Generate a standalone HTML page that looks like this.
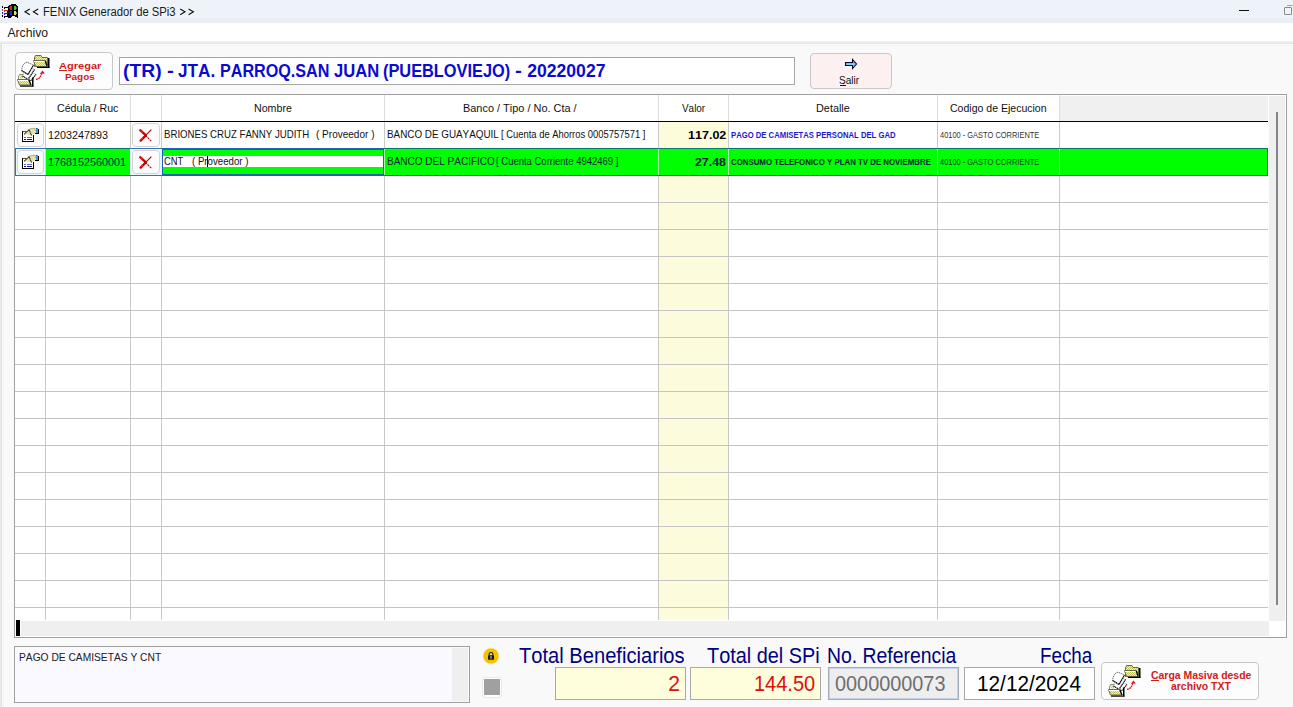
<!DOCTYPE html>
    <html><head><meta charset="utf-8">
    <style>
    *{box-sizing:border-box;margin:0;padding:0}
    html,body{width:1293px;height:707px;overflow:hidden;background:#f9f9f9;font-family:"Liberation Sans",sans-serif;color:#000;font-kerning:none}
    .a{position:absolute}
    .t{position:absolute;white-space:pre;transform-origin:0 0;font-kerning:none}
    svg{position:absolute;overflow:visible}
    </style></head><body>
    
<div class="a" style="left:0;top:0;width:1293px;height:18px;background:#eef3fa"></div>
<div class="a" style="left:0;top:18px;width:1293px;height:5px;background:#ebeff5"></div>
<svg style="left:0;top:0" width="24" height="24" viewBox="0 0 24 24" shape-rendering="crispEdges">
<path d="M8 6h1v-1h2v-1h5v1h1v1h1v12h-1v-1h-2v-1h-3v1h-1v1h-3v-1h-1z" fill="#000"/>
<rect x="10" y="6" width="2" height="4" fill="#e02424"/><rect x="9" y="7" width="1" height="2" fill="#a01818"/>
<rect x="14" y="6" width="2" height="4" fill="#34d034"/><rect x="16" y="7" width="1" height="2" fill="#1a801a"/>
<rect x="10" y="11" width="2" height="4" fill="#1030e0"/><rect x="9" y="12" width="1" height="2" fill="#0a1890"/>
<rect x="14" y="11" width="2" height="4" fill="#f0e040"/><rect x="16" y="12" width="1" height="2" fill="#a09020"/>
<rect x="2" y="6" width="1" height="2" fill="#000"/><rect x="2" y="9" width="1" height="2" fill="#a05050"/>
<rect x="2" y="12" width="1" height="2" fill="#2030a0"/><rect x="2" y="15" width="1" height="2" fill="#000"/>
<rect x="4" y="7" width="4" height="1" fill="#000"/><rect x="4" y="8" width="1" height="1" fill="#000"/>
<rect x="5" y="10" width="3" height="1" fill="#e02020"/><rect x="4" y="10" width="1" height="2" fill="#e02020"/>
<rect x="5" y="13" width="3" height="1" fill="#1020b0"/><rect x="4" y="13" width="1" height="2" fill="#1020b0"/>
<rect x="5" y="16" width="3" height="1" fill="#000"/><rect x="4" y="16" width="1" height="2" fill="#000"/>
</svg>
<div class="t" style="left:42.88px;top:6px;font-size:12.5px;line-height:12.5px;color:#1a1a1a;transform:scaleX(0.9003);">FENIX Generador de SPi3</div>
<svg style="left:0;top:0" width="200" height="24" viewBox="0 0 200 24"><g fill="none" stroke="#111" stroke-width="1.15">
<path d="M29.8 8.9 L25 11.8 L29.8 14.7"/><path d="M38.2 8.9 L33.4 11.8 L38.2 14.7"/>
<path d="M180.2 8.9 L185 11.8 L180.2 14.7"/><path d="M188.6 8.9 L193.4 11.8 L188.6 14.7"/></g></svg>
<div class="a" style="left:1239px;top:10px;width:10px;height:1px;background:#111"></div>
<div class="a" style="left:1284px;top:7px;width:8px;height:8px;border:1px solid #8a8a8a;border-radius:1px"></div>
<div class="a" style="left:1287px;top:5px;width:6px;height:1px;background:#aaa"></div>
<div class="a" style="left:0;top:23px;width:1293px;height:18px;background:#fff"></div>
<div class="t" style="left:7.38px;top:27px;font-size:12.21px;line-height:12.21px;color:#1a1a1a;">Archivo</div>
<div class="a" style="left:0;top:41px;width:1293px;height:2px;background:#efefef"></div>
<div class="a" style="left:0;top:43px;width:1293px;height:1px;background:#e3e3e3"></div>
<div class="a" style="left:0;top:44px;width:1293px;height:1px;background:#fdfdfd"></div><div class="a" style="left:3px;top:45px;width:1290px;height:1px;background:#f2f2f2"></div><div class="a" style="left:3px;top:45px;width:1px;height:662px;background:#f3f3f3"></div>
<div class="a" style="left:0;top:44px;width:1px;height:663px;background:#ebebeb"></div><div class="a" style="left:1px;top:44px;width:1px;height:663px;background:#dedede"></div><div class="a" style="left:2px;top:45px;width:1px;height:662px;background:#fdfdfd"></div>
<div class="a" style="left:15px;top:52px;width:98px;height:38px;border:1px solid #c8c8c8;border-radius:4px;background:#fdfdfd"></div>
<svg style="left:17px;top:54px" width="34" height="34" viewBox="0 0 34 34">
<defs><pattern id="chka" width="2" height="2" patternUnits="userSpaceOnUse"><rect width="2" height="2" fill="#f2f29a"/><rect width="1" height="1" fill="#c4c45a"/><rect x="1" y="1" width="1" height="1" fill="#c4c45a"/></pattern></defs>
<!-- top folder -->
<path d="M17.5 4 L18.5 1.5 L24 1.5 L25 3.5 L30.5 3.5 L30.5 12.5 L17.5 12.5 Z" fill="url(#chka)" stroke="#6a6a4a" stroke-width="1"/>
<path d="M16.5 6.5 L28.5 6.5 L30.5 12.5 L18.5 12.5 Z" fill="url(#chka)" stroke="#6a6a4a" stroke-width="1"/>
<path d="M17 7.5 H28" stroke="#fff" stroke-width="1"/>
<path d="M28.2 7 L30 12" stroke="#000" stroke-width="1.2"/>
<rect x="31" y="4" width="1.5" height="10" fill="#000"/><rect x="20" y="12.8" width="12.5" height="1.2" fill="#000"/>
<!-- papers -->
<path d="M1.5 23 L2.5 20.5 L6 20.5 L7 22.5 L12.5 22.5 L12.5 26 L1.5 26 Z" fill="#fafafa" stroke="#8a8a7a" stroke-width="1"/>
<rect x="3" y="21.5" width="3" height="3" fill="url(#chka)"/>
<path d="M13.5 27 L19 20.5 L16 19 L12 24 Z" fill="#fff" stroke="#999" stroke-width="0.9" stroke-dasharray="1.3 0.7"/>
<path d="M13.5 27 L19 20.5" fill="none" stroke="#000" stroke-width="1.1" stroke-dasharray="1.3 0.6"/>
<path d="M5.5 22 L11 25.3 L17.5 15.5 L15.5 14.8 L10 13 Z" fill="#fff" stroke="#999" stroke-width="0.9" stroke-dasharray="1.3 0.7"/>
<path d="M5.5 22 L11 25.3 L17.5 15.5" fill="none" stroke="#000" stroke-width="1.1" stroke-dasharray="1.3 0.6"/>
<path d="M10 8.2 C7 8.5 5 12 4.6 16.5 L11 20.5 L16.5 11 Z" fill="#fff" stroke="#666" stroke-width="1" stroke-dasharray="1.3 0.7"/>
<path d="M4.6 16.5 L11 20.5 L16.5 11" fill="none" stroke="#000" stroke-width="1.2" stroke-dasharray="1.4 0.6"/>
<!-- bottom folder -->
<path d="M0.5 25.5 L11.5 25.5 L14 31 L2.5 31 Z" fill="url(#chka)" stroke="#6a6a4a" stroke-width="1"/>
<path d="M1 26.5 H11.5" stroke="#fff" stroke-width="1"/>
<path d="M11.8 25.8 L14 31" stroke="#000" stroke-width="1.2"/>
<rect x="15" y="23.5" width="1.5" height="9" fill="#000"/><rect x="3" y="31.5" width="13.5" height="1.2" fill="#000"/>
<!-- red arrow -->
<path d="M19 25.3 Q23 25 24.6 20" fill="none" stroke="#d81010" stroke-width="1.3" stroke-dasharray="1.8 0.6"/>
<path d="M25.5 16.6 L22.8 19.9 L27.8 19.6 Z" fill="#e01010"/>
</svg>
<div class="t" style="left:58.72px;top:61px;font-size:9.884px;line-height:9.884px;color:#d21a1a;font-weight:bold;transform:scaleX(1.1199);">Agregar</div><div class="a" style="left:59.00px;top:70px;width:7.93px;height:1px;background:#d21a1a"></div>
<div class="t" style="left:65.24px;top:72px;font-size:9.593px;line-height:9.593px;color:#d21a1a;font-weight:bold;transform:scaleX(1.0341);">Pagos</div>
<div class="a" style="left:119px;top:57px;width:676px;height:28px;background:#fff;border:1px solid #a6a6a6"></div>
<div class="t" style="left:123.34px;top:63px;font-size:17.6px;line-height:17.6px;color:#0b0bd0;font-weight:bold;transform:scaleX(1.0978);">(TR)</div>
<div class="t" style="left:166.60px;top:63px;font-size:17.6px;line-height:17.6px;color:#0b0bd0;font-weight:bold;transform:scaleX(1.1636);">-</div>
<div class="t" style="left:177.74px;top:63px;font-size:17.6px;line-height:17.6px;color:#0b0bd0;font-weight:bold;transform:scaleX(0.9765);">JTA.</div>
<div class="t" style="left:220.42px;top:63px;font-size:17.6px;line-height:17.6px;color:#0b0bd0;font-weight:bold;transform:scaleX(0.9176);">PARROQ.SAN</div>
<div class="t" style="left:334.35px;top:63px;font-size:17.6px;line-height:17.6px;color:#0b0bd0;font-weight:bold;transform:scaleX(0.9426);">JUAN</div>
<div class="t" style="left:383.39px;top:63px;font-size:17.6px;line-height:17.6px;color:#0b0bd0;font-weight:bold;transform:scaleX(0.9293);">(PUEBLOVIEJO)</div>
<div class="t" style="left:515.40px;top:63px;font-size:17.6px;line-height:17.6px;color:#0b0bd0;font-weight:bold;transform:scaleX(1.1636);">-</div>
<div class="t" style="left:527.19px;top:63px;font-size:17.6px;line-height:17.6px;color:#0b0bd0;font-weight:bold;">20220027</div>
<div class="a" style="left:810px;top:53px;width:82px;height:36px;border:1px solid #c8c8c8;border-radius:4px;background:#fdf0f0"></div>
<svg style="left:844px;top:58px" width="14" height="12" viewBox="0 0 14 12">
    <defs><linearGradient id="ag" x1="0" y1="0" x2="0" y2="1"><stop offset="0" stop-color="#4aa0e8"/><stop offset="1" stop-color="#a8eeff"/></linearGradient></defs>
    <path d="M1.5 4.5 H8.5 V1.5 L12.5 6 L8.5 10.5 V7.5 H1.5 Z" fill="url(#ag)" stroke="#0a0a30" stroke-width="1.1"/>
    </svg>
<div class="t" style="left:839.35px;top:75px;font-size:11.192px;line-height:11.192px;color:#111;transform:scaleX(0.8942);">Salir</div><div class="a" style="left:839.80px;top:85px;width:6.26px;height:1px;background:#111"></div>
<div class="a" style="left:14px;top:94px;width:1273px;height:544px;border:1px solid #a0a0a0;background:#fff"></div>
<div class="a" style="left:15px;top:95px;width:1271px;height:1px;background:#fff"></div>
<div class="a" style="left:1060px;top:96px;width:208px;height:25px;background:#f0f0f0"></div>
<div class="a" style="left:658px;top:122px;width:70px;height:498px;background:#fcfcdc"></div>
<div class="a" style="left:46px;top:148px;width:1222px;height:28px;background:#00ff00"></div>
<div class="a" style="left:15px;top:148px;width:31px;height:28px;background:#e6f8ff"></div>
<div class="a" style="left:130px;top:148px;width:32px;height:28px;background:#e6f8ff"></div>
<div class="a" style="left:45px;top:95px;width:1px;height:26px;background:#dcdcdc"></div>
<div class="a" style="left:45px;top:122px;width:1px;height:26px;background:#c8c8c8"></div>
<div class="a" style="left:45px;top:176px;width:1px;height:444px;background:#c8c8c8"></div>
<div class="a" style="left:130px;top:95px;width:1px;height:26px;background:#dcdcdc"></div>
<div class="a" style="left:130px;top:122px;width:1px;height:26px;background:#c8c8c8"></div>
<div class="a" style="left:130px;top:176px;width:1px;height:444px;background:#c8c8c8"></div>
<div class="a" style="left:161px;top:95px;width:1px;height:26px;background:#dcdcdc"></div>
<div class="a" style="left:161px;top:122px;width:1px;height:26px;background:#c8c8c8"></div>
<div class="a" style="left:161px;top:176px;width:1px;height:444px;background:#c8c8c8"></div>
<div class="a" style="left:384px;top:95px;width:1px;height:26px;background:#dcdcdc"></div>
<div class="a" style="left:384px;top:122px;width:1px;height:26px;background:#c8c8c8"></div>
<div class="a" style="left:384px;top:176px;width:1px;height:444px;background:#c8c8c8"></div>
<div class="a" style="left:384px;top:149px;width:1px;height:26px;background:#a8f8a8"></div>
<div class="a" style="left:658px;top:95px;width:1px;height:26px;background:#dcdcdc"></div>
<div class="a" style="left:658px;top:122px;width:1px;height:26px;background:#c8c8c8"></div>
<div class="a" style="left:658px;top:176px;width:1px;height:444px;background:#c8c8c8"></div>
<div class="a" style="left:658px;top:149px;width:1px;height:26px;background:#a8f8a8"></div>
<div class="a" style="left:728px;top:95px;width:1px;height:26px;background:#dcdcdc"></div>
<div class="a" style="left:728px;top:122px;width:1px;height:26px;background:#c8c8c8"></div>
<div class="a" style="left:728px;top:176px;width:1px;height:444px;background:#c8c8c8"></div>
<div class="a" style="left:728px;top:149px;width:1px;height:26px;background:#a8f8a8"></div>
<div class="a" style="left:937px;top:95px;width:1px;height:26px;background:#dcdcdc"></div>
<div class="a" style="left:937px;top:122px;width:1px;height:26px;background:#c8c8c8"></div>
<div class="a" style="left:937px;top:176px;width:1px;height:444px;background:#c8c8c8"></div>
<div class="a" style="left:937px;top:149px;width:1px;height:26px;background:#a8f8a8"></div>
<div class="a" style="left:1059px;top:95px;width:1px;height:26px;background:#dcdcdc"></div>
<div class="a" style="left:1059px;top:122px;width:1px;height:26px;background:#c8c8c8"></div>
<div class="a" style="left:1059px;top:176px;width:1px;height:444px;background:#c8c8c8"></div>
<div class="a" style="left:1059px;top:149px;width:1px;height:26px;background:#a8f8a8"></div>
<div class="a" style="left:45px;top:149px;width:1px;height:26px;background:#c8d8e0"></div>
<div class="a" style="left:15px;top:202px;width:1253px;height:1px;background:#c4c4c4"></div>
<div class="a" style="left:15px;top:229px;width:1253px;height:1px;background:#c4c4c4"></div>
<div class="a" style="left:15px;top:256px;width:1253px;height:1px;background:#c4c4c4"></div>
<div class="a" style="left:15px;top:283px;width:1253px;height:1px;background:#c4c4c4"></div>
<div class="a" style="left:15px;top:310px;width:1253px;height:1px;background:#c4c4c4"></div>
<div class="a" style="left:15px;top:337px;width:1253px;height:1px;background:#c4c4c4"></div>
<div class="a" style="left:15px;top:364px;width:1253px;height:1px;background:#c4c4c4"></div>
<div class="a" style="left:15px;top:391px;width:1253px;height:1px;background:#c4c4c4"></div>
<div class="a" style="left:15px;top:418px;width:1253px;height:1px;background:#c4c4c4"></div>
<div class="a" style="left:15px;top:445px;width:1253px;height:1px;background:#c4c4c4"></div>
<div class="a" style="left:15px;top:472px;width:1253px;height:1px;background:#c4c4c4"></div>
<div class="a" style="left:15px;top:499px;width:1253px;height:1px;background:#c4c4c4"></div>
<div class="a" style="left:15px;top:526px;width:1253px;height:1px;background:#c4c4c4"></div>
<div class="a" style="left:15px;top:553px;width:1253px;height:1px;background:#c4c4c4"></div>
<div class="a" style="left:15px;top:580px;width:1253px;height:1px;background:#c4c4c4"></div>
<div class="a" style="left:15px;top:607px;width:1253px;height:1px;background:#c4c4c4"></div>
<div class="a" style="left:15px;top:121px;width:1253px;height:1px;background:#000"></div>
<div class="a" style="left:15px;top:148px;width:1253px;height:28px;border:1px solid #0c7a6a"></div>
<div class="a" style="left:15px;top:148px;width:31px;height:28px;border:1px solid #3a70b0;border-right:none"></div>
<div class="a" style="left:130px;top:148px;width:32px;height:28px;border-top:1px solid #3a70b0;border-bottom:1px solid #3a70b0"></div>
<div class="a" style="left:162px;top:148px;width:222px;height:28px;border:1px solid #1a62bc;border-top-width:2px;border-bottom-width:2px"></div>
<div class="a" style="left:163px;top:156px;width:220px;height:11px;background:#fff"></div>
<div class="t" style="left:57.16px;top:102px;font-size:11.628px;line-height:11.628px;color:#111;transform:scaleX(0.9152);">Cédula / Ruc</div>
<div class="t" style="left:253.72px;top:102px;font-size:11.628px;line-height:11.628px;color:#111;transform:scaleX(0.9176);">Nombre</div>
<div class="t" style="left:462.50px;top:102px;font-size:11.628px;line-height:11.628px;color:#111;transform:scaleX(0.9416);">Banco / Tipo / No. Cta /</div>
<div class="t" style="left:681.96px;top:102px;font-size:11.628px;line-height:11.628px;color:#111;transform:scaleX(0.8550);">Valor</div>
<div class="t" style="left:815.61px;top:102px;font-size:11.628px;line-height:11.628px;color:#111;transform:scaleX(0.9359);">Detalle</div>
<div class="t" style="left:950.16px;top:102px;font-size:11.628px;line-height:11.628px;color:#111;transform:scaleX(0.9068);">Codigo de Ejecucion</div>
<div class="a" style="left:17px;top:123px;width:27px;height:24px;border:1px solid #d4d4d4;border-radius:4px;background:#fbfbfb"></div>
<svg style="left:22px;top:128px" width="18" height="15" viewBox="0 0 18 15" shape-rendering="crispEdges">
<rect x="0" y="3" width="12" height="11" fill="#fdfdfd"/>
<rect x="0" y="3" width="6" height="1" fill="#555"/>
<rect x="0" y="3" width="1" height="11" fill="#000"/>
<rect x="0" y="13" width="12" height="1" fill="#000"/>
<rect x="11" y="7" width="1" height="7" fill="#000"/>
<rect x="2" y="9" width="2" height="1" fill="#5868c8"/><rect x="5" y="9" width="5" height="1" fill="#5868c8"/>
<rect x="2" y="11" width="2" height="1" fill="#10108a"/><rect x="5" y="11" width="5" height="1" fill="#10108a"/>
<path d="M2 6 L7 1 L13 0 L14 5 L9 7.5 Z" fill="#e6e2b0" shape-rendering="auto"/>
<path d="M7.5 1 L13 0.2 L13.5 3" fill="none" stroke="#b8b080" stroke-width="1" shape-rendering="auto"/>
<path d="M2.3 6.3 L7 1.5 L9.6 7.6" fill="none" stroke="#111" stroke-width="1.1" stroke-dasharray="1.2 0.5" shape-rendering="auto"/>
<rect x="14" y="0" width="2" height="5" fill="#3a9ae8"/><rect x="14" y="0" width="1" height="1" fill="#1a60b0"/>
<rect x="16" y="1" width="1" height="5" fill="#000"/><rect x="13" y="5" width="4" height="1" fill="#000"/>
</svg>
<div class="a" style="left:132px;top:123px;width:28px;height:24px;border:1px solid #d4d4d4;border-radius:4px;background:#fbfbfb"></div>
<svg style="left:139px;top:129px" width="14" height="14" viewBox="0 0 14 14">
<path d="M1.2 1.2 L6.6 6.2" stroke="#c80000" stroke-width="2.3" stroke-linecap="round"/>
<path d="M1.6 11.6 L6.6 6.6" stroke="#c80000" stroke-width="2.3" stroke-linecap="round"/>
<path d="M6.4 6.2 L12.4 12.4" stroke="#b00000" stroke-width="1.1" stroke-dasharray="2.2 0.9"/>
<path d="M6.4 6.6 L12.4 0.6" stroke="#b00000" stroke-width="1.1"/>
<path d="M1.6 1.4 L3.6 3.2" stroke="#ff5a3a" stroke-width="0.8"/>
<path d="M2 10.8 L3.8 9" stroke="#ff5a3a" stroke-width="0.8"/>
</svg>
<div class="a" style="left:17px;top:150px;width:27px;height:24px;border:1px solid #d4d4d4;border-radius:4px;background:#fbfbfb"></div>
<svg style="left:22px;top:155px" width="18" height="15" viewBox="0 0 18 15" shape-rendering="crispEdges">
<rect x="0" y="3" width="12" height="11" fill="#fdfdfd"/>
<rect x="0" y="3" width="6" height="1" fill="#555"/>
<rect x="0" y="3" width="1" height="11" fill="#000"/>
<rect x="0" y="13" width="12" height="1" fill="#000"/>
<rect x="11" y="7" width="1" height="7" fill="#000"/>
<rect x="2" y="9" width="2" height="1" fill="#5868c8"/><rect x="5" y="9" width="5" height="1" fill="#5868c8"/>
<rect x="2" y="11" width="2" height="1" fill="#10108a"/><rect x="5" y="11" width="5" height="1" fill="#10108a"/>
<path d="M2 6 L7 1 L13 0 L14 5 L9 7.5 Z" fill="#e6e2b0" shape-rendering="auto"/>
<path d="M7.5 1 L13 0.2 L13.5 3" fill="none" stroke="#b8b080" stroke-width="1" shape-rendering="auto"/>
<path d="M2.3 6.3 L7 1.5 L9.6 7.6" fill="none" stroke="#111" stroke-width="1.1" stroke-dasharray="1.2 0.5" shape-rendering="auto"/>
<rect x="14" y="0" width="2" height="5" fill="#3a9ae8"/><rect x="14" y="0" width="1" height="1" fill="#1a60b0"/>
<rect x="16" y="1" width="1" height="5" fill="#000"/><rect x="13" y="5" width="4" height="1" fill="#000"/>
</svg>
<div class="a" style="left:132px;top:150px;width:28px;height:24px;border:1px solid #d4d4d4;border-radius:4px;background:#fbfbfb"></div>
<svg style="left:139px;top:156px" width="14" height="14" viewBox="0 0 14 14">
<path d="M1.2 1.2 L6.6 6.2" stroke="#c80000" stroke-width="2.3" stroke-linecap="round"/>
<path d="M1.6 11.6 L6.6 6.6" stroke="#c80000" stroke-width="2.3" stroke-linecap="round"/>
<path d="M6.4 6.2 L12.4 12.4" stroke="#b00000" stroke-width="1.1" stroke-dasharray="2.2 0.9"/>
<path d="M6.4 6.6 L12.4 0.6" stroke="#b00000" stroke-width="1.1"/>
<path d="M1.6 1.4 L3.6 3.2" stroke="#ff5a3a" stroke-width="0.8"/>
<path d="M2 10.8 L3.8 9" stroke="#ff5a3a" stroke-width="0.8"/>
</svg>
<div class="t" style="left:48.38px;top:130px;font-size:11.337px;line-height:11.337px;color:#111;transform:scaleX(0.9515);">1203247893</div>
<div class="t" style="left:164.01px;top:130px;font-size:10.17px;line-height:10.17px;color:#111;transform:scaleX(0.9494);">BRIONES CRUZ FANNY JUDITH</div>
<div class="t" style="left:316.38px;top:130px;font-size:10.17px;line-height:10.17px;color:#111;transform:scaleX(0.9865);">( Proveedor )</div>
<div class="t" style="left:386.69px;top:130px;font-size:10.17px;line-height:10.17px;color:#111;transform:scaleX(0.9710);">BANCO DE GUAYAQUIL</div>
<div class="t" style="left:500.63px;top:130px;font-size:10.17px;line-height:10.17px;color:#111;transform:scaleX(0.9262);">[ Cuenta de Ahorros 0005757571 ]</div>
<div class="t" style="left:687.71px;top:129px;font-size:11.628px;line-height:11.628px;color:#000;font-weight:bold;transform:scaleX(1.0795);">117.02</div>
<div class="t" style="left:731.28px;top:130px;font-size:9.7px;line-height:9.7px;color:#1a1ad0;font-weight:bold;transform:scaleX(0.7940);">PAGO DE CAMISETAS PERSONAL DEL GAD</div>
<div class="t" style="left:940.13px;top:130px;font-size:9.7px;line-height:9.7px;color:#333;transform:scaleX(0.7683);">40100 - GASTO CORRIENTE</div>
<div class="t" style="left:48.38px;top:157px;font-size:11.337px;line-height:11.337px;color:#0c2838;transform:scaleX(0.9522);">1768152560001</div>
<div class="t" style="left:164.12px;top:157px;font-size:10.17px;line-height:10.17px;color:#111;transform:scaleX(0.9230);">CNT</div>
<div class="t" style="left:192.30px;top:157px;font-size:10.17px;line-height:10.17px;color:#111;transform:scaleX(0.9520);">( Proveedor )</div>
<div class="a" style="left:207px;top:156px;width:1px;height:11px;background:#000"></div>
<div class="t" style="left:386.98px;top:157px;font-size:10.17px;line-height:10.17px;color:#0c2838;transform:scaleX(0.9851);">BANCO DEL PACIFICO</div>
<div class="t" style="left:496.32px;top:157px;font-size:10.17px;line-height:10.17px;color:#0c2838;transform:scaleX(0.9343);">[ Cuenta Corriente 4942469 ]</div>
<div class="t" style="left:695.07px;top:156px;font-size:11.628px;line-height:11.628px;color:#0a2040;font-weight:bold;transform:scaleX(1.0622);">27.48</div>
<div class="t" style="left:731.48px;top:157px;font-size:9.7px;line-height:9.7px;color:#0c2838;font-weight:bold;transform:scaleX(0.8108);">CONSUMO TELEFONICO Y PLAN TV DE NOVIEMBRE</div>
<div class="t" style="left:940.13px;top:157px;font-size:9.7px;line-height:9.7px;color:#104020;transform:scaleX(0.7683);">40100 - GASTO CORRIENTE</div>
<div class="a" style="left:1269px;top:96px;width:16px;height:525px;background:#efefef"></div>
<div class="a" style="left:1276px;top:112px;width:2px;height:493px;background:#868686"></div>
<div class="a" style="left:15px;top:620px;width:1254px;height:17px;background:#fff"></div><div class="a" style="left:21px;top:621px;width:1248px;height:15px;background:#efefef"></div>
<div class="a" style="left:16px;top:620px;width:4px;height:16px;background:#000"></div>
<div class="a" style="left:14px;top:646px;width:456px;height:57px;border:1px solid #a0a0a0;background:#f9f9ff"></div>
<div class="a" style="left:452px;top:648px;width:16px;height:53px;background:#efefef"></div>
<div class="t" style="left:18.86px;top:652px;font-size:11.34px;line-height:11.34px;color:#202020;transform:scaleX(0.9032);">PAGO DE CAMISETAS Y CNT</div>
<svg style="left:482px;top:647px" width="18" height="18" viewBox="0 0 18 18">
    <circle cx="9" cy="9" r="7.8" fill="#f4c300"/>
<path d="M6.6 8.4 V7.6 Q6.6 4.9 9 4.9 Q11.4 4.9 11.4 7.6 V8.4 Z" fill="#1c1a10"/>
<path d="M7.7 8.4 V7.7 Q7.7 6.1 9 6.1 Q10.3 6.1 10.3 7.7 V8.4 Z" fill="#f0e4a0"/>
<rect x="6" y="8.3" width="6" height="4.4" fill="#1c1a10"/>
<rect x="8.4" y="9.2" width="1.2" height="2.4" fill="#e0cc70"/>
</svg>
<div class="a" style="left:482px;top:677px;width:20px;height:21px;border:1px solid #e8e8e8;border-radius:3px;background:#fff"></div>
<div class="a" style="left:484px;top:679px;width:16px;height:16px;background:#a0a0a0"></div>
<div class="t" style="left:519.15px;top:646px;font-size:21.367px;line-height:21.367px;color:#000080;transform:scaleX(0.9426);">Total Beneficiarios</div>
<div class="t" style="left:706.75px;top:646px;font-size:21.367px;line-height:21.367px;color:#000080;transform:scaleX(0.9302);">Total del SPi</div>
<div class="t" style="left:826.51px;top:646px;font-size:21.367px;line-height:21.367px;color:#000080;transform:scaleX(0.9079);">No. Referencia</div>
<div class="t" style="left:1040.06px;top:646px;font-size:21.367px;line-height:21.367px;color:#000080;transform:scaleX(0.8797);">Fecha</div>
<div class="a" style="left:555px;top:667px;width:131px;height:33px;border:1px solid #a8a8a8;background:#fffedc"></div>
<div class="t" style="left:668.27px;top:673px;font-size:21.221px;line-height:21.221px;color:#dc1010;">2</div>
<div class="a" style="left:690px;top:667px;width:131px;height:33px;border:1px solid #a8a8a8;background:#fffedc"></div>
<div class="t" style="left:754.18px;top:673px;font-size:21.221px;line-height:21.221px;color:#dc1010;transform:scaleX(0.9414);">144.50</div>
<div class="a" style="left:828px;top:667px;width:131px;height:33px;border:1px solid #a2abb8;box-shadow:inset 0 0 0 1px #c6d3e3;background:#eeeeee"></div>
<div class="t" style="left:834.62px;top:673px;font-size:21.221px;line-height:21.221px;color:#6e6e6e;transform:scaleX(0.9358);">0000000073</div>
<div class="a" style="left:964px;top:667px;width:131px;height:33px;border:1px solid #a8a8a8;background:#fff"></div>
<div class="t" style="left:977.12px;top:673px;font-size:21.221px;line-height:21.221px;color:#000;transform:scaleX(0.9791);">12/12/2024</div>
<div class="a" style="left:1101px;top:662px;width:158px;height:38px;border:1px solid #c8c8c8;border-radius:4px;background:#fdfdfd"></div>
<svg style="left:1108px;top:664px" width="34" height="34" viewBox="0 0 34 34">
<defs><pattern id="chkb" width="2" height="2" patternUnits="userSpaceOnUse"><rect width="2" height="2" fill="#f2f29a"/><rect width="1" height="1" fill="#c4c45a"/><rect x="1" y="1" width="1" height="1" fill="#c4c45a"/></pattern></defs>
<!-- top folder -->
<path d="M17.5 4 L18.5 1.5 L24 1.5 L25 3.5 L30.5 3.5 L30.5 12.5 L17.5 12.5 Z" fill="url(#chkb)" stroke="#6a6a4a" stroke-width="1"/>
<path d="M16.5 6.5 L28.5 6.5 L30.5 12.5 L18.5 12.5 Z" fill="url(#chkb)" stroke="#6a6a4a" stroke-width="1"/>
<path d="M17 7.5 H28" stroke="#fff" stroke-width="1"/>
<path d="M28.2 7 L30 12" stroke="#000" stroke-width="1.2"/>
<rect x="31" y="4" width="1.5" height="10" fill="#000"/><rect x="20" y="12.8" width="12.5" height="1.2" fill="#000"/>
<!-- papers -->
<path d="M1.5 23 L2.5 20.5 L6 20.5 L7 22.5 L12.5 22.5 L12.5 26 L1.5 26 Z" fill="#fafafa" stroke="#8a8a7a" stroke-width="1"/>
<rect x="3" y="21.5" width="3" height="3" fill="url(#chkb)"/>
<path d="M13.5 27 L19 20.5 L16 19 L12 24 Z" fill="#fff" stroke="#999" stroke-width="0.9" stroke-dasharray="1.3 0.7"/>
<path d="M13.5 27 L19 20.5" fill="none" stroke="#000" stroke-width="1.1" stroke-dasharray="1.3 0.6"/>
<path d="M5.5 22 L11 25.3 L17.5 15.5 L15.5 14.8 L10 13 Z" fill="#fff" stroke="#999" stroke-width="0.9" stroke-dasharray="1.3 0.7"/>
<path d="M5.5 22 L11 25.3 L17.5 15.5" fill="none" stroke="#000" stroke-width="1.1" stroke-dasharray="1.3 0.6"/>
<path d="M10 8.2 C7 8.5 5 12 4.6 16.5 L11 20.5 L16.5 11 Z" fill="#fff" stroke="#666" stroke-width="1" stroke-dasharray="1.3 0.7"/>
<path d="M4.6 16.5 L11 20.5 L16.5 11" fill="none" stroke="#000" stroke-width="1.2" stroke-dasharray="1.4 0.6"/>
<!-- bottom folder -->
<path d="M0.5 25.5 L11.5 25.5 L14 31 L2.5 31 Z" fill="url(#chkb)" stroke="#6a6a4a" stroke-width="1"/>
<path d="M1 26.5 H11.5" stroke="#fff" stroke-width="1"/>
<path d="M11.8 25.8 L14 31" stroke="#000" stroke-width="1.2"/>
<rect x="15" y="23.5" width="1.5" height="9" fill="#000"/><rect x="3" y="31.5" width="13.5" height="1.2" fill="#000"/>
<!-- red arrow -->
<path d="M19 25.3 Q23 25 24.6 20" fill="none" stroke="#d81010" stroke-width="1.3" stroke-dasharray="1.8 0.6"/>
<path d="M25.5 16.6 L22.8 19.9 L27.8 19.6 Z" fill="#e01010"/>
</svg>
<div class="t" style="left:1150.97px;top:671px;font-size:10.32px;line-height:10.32px;color:#d21a1a;font-weight:bold;transform:scaleX(1.0116);">Carga Masiva desde</div><div class="a" style="left:1151.40px;top:680px;width:7.33px;height:1px;background:#d21a1a"></div>
<div class="t" style="left:1171.09px;top:682px;font-size:10.32px;line-height:10.32px;color:#d21a1a;font-weight:bold;transform:scaleX(1.0127);">archivo TXT</div>
</body></html>
